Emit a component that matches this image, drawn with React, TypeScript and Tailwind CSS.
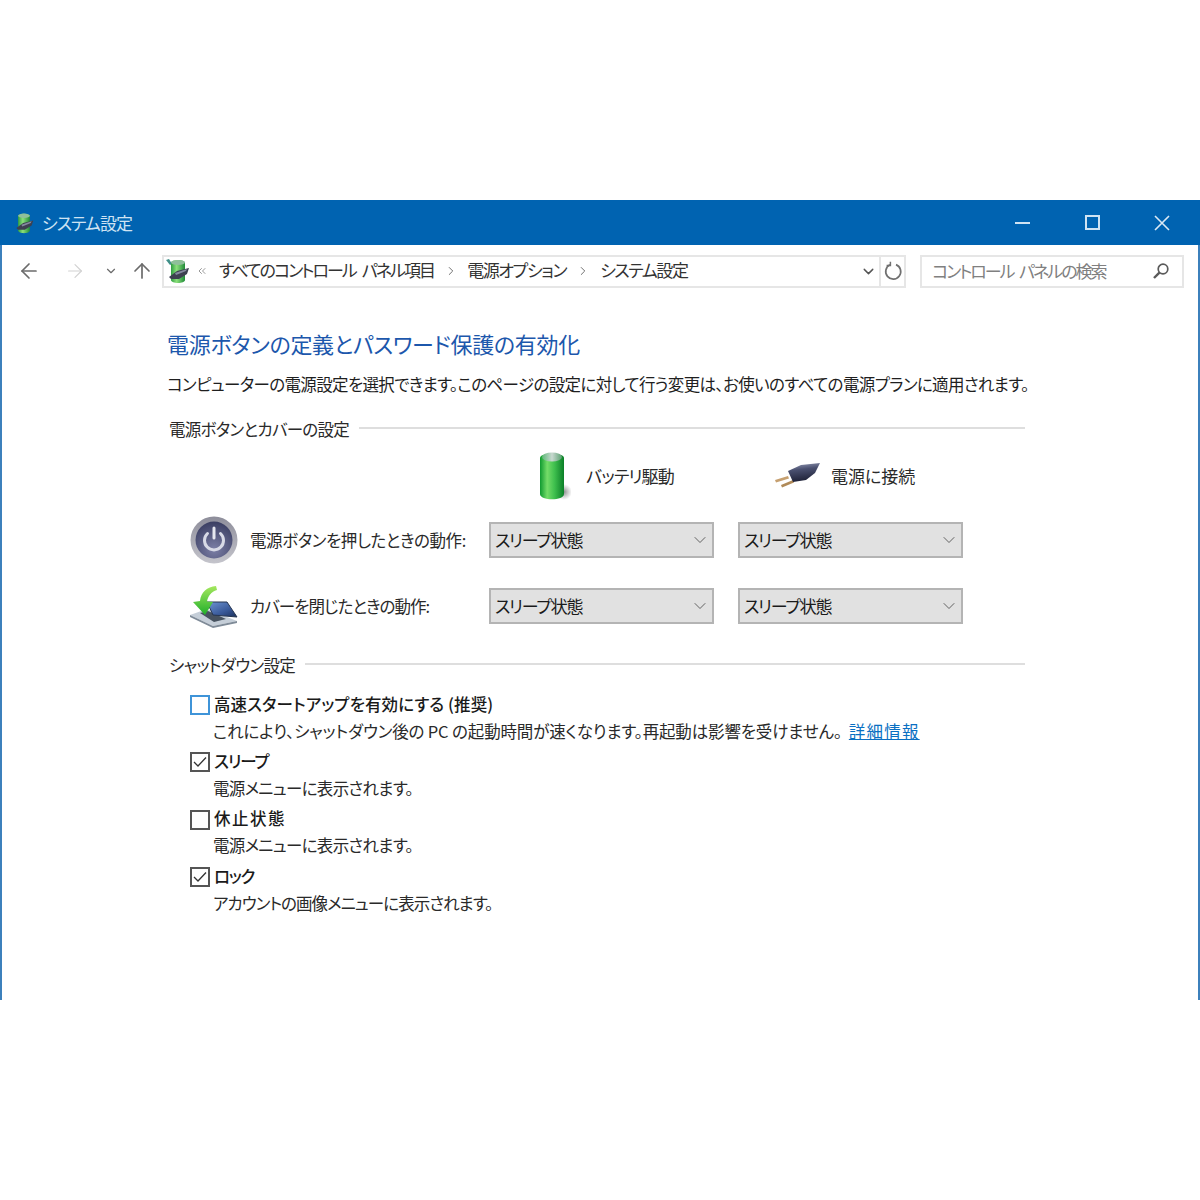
import { ArrowLeft, ArrowRight, ArrowUp, ChevronDown, ChevronRight, ChevronsLeft } from 'lucide-react';

const text = "font-['Noto_Sans_CJK_JP','Liberation_Sans',sans-serif] [font-feature-settings:'palt']";

function BatteryIcon() {
  return (
    <svg width="34" height="50" viewBox="0 0 34 50">
      <defs>
        <linearGradient id="batBody" x1="0" x2="1" y1="0" y2="0">
          <stop offset="0" stopColor="#0f9a30" />
          <stop offset="0.3" stopColor="#74dc68" />
          <stop offset="0.6" stopColor="#3fc04e" />
          <stop offset="1" stopColor="#0b7f28" />
        </linearGradient>
        <linearGradient id="batTop" x1="0" x2="1" y1="0" y2="0">
          <stop offset="0" stopColor="#5fb878" />
          <stop offset="0.5" stopColor="#c8d8d0" />
          <stop offset="1" stopColor="#5aa070" />
        </linearGradient>
        <radialGradient id="batShadow">
          <stop offset="0" stopColor="#707070" stopOpacity="0.8" />
          <stop offset="1" stopColor="#8a8a8a" stopOpacity="0" />
        </radialGradient>
      </defs>
      <ellipse cx="27" cy="41" rx="8" ry="8" fill="url(#batShadow)" />
      <path d="M3 7 C3 1 27 1 27 7 V43 C27 50 3 50 3 43 Z" fill="url(#batBody)" />
      <ellipse cx="15" cy="6" rx="10" ry="4.5" fill="url(#batTop)" />
    </svg>
  );
}

function PlugIcon() {
  return (
    <svg width="48" height="26" viewBox="0 0 48 26">
      <defs>
        <linearGradient id="plugBody" x1="0" x2="0.2" y1="0" y2="1">
          <stop offset="0" stopColor="#9aa0ba" />
          <stop offset="0.4" stopColor="#4a5070" />
          <stop offset="1" stopColor="#1f2238" />
        </linearGradient>
      </defs>
      <path d="M2 17 L15 13 L16 15.5 L3 19.5 Z" fill="#c6a070" />
      <path d="M8 22 L20 17 L21 19.5 L9 24.5 Z" fill="#b08a58" />
      <path d="M15 8 L28 2 L47 0 L42 10 L33 17 L20 19 Z" fill="url(#plugBody)" />
    </svg>
  );
}

function PowerIcon() {
  return (
    <svg width="48" height="48" viewBox="0 0 48 48">
      <defs>
        <linearGradient id="pwrRing" x1="0" x2="0" y1="0" y2="1">
          <stop offset="0" stopColor="#8d8d9a" />
          <stop offset="1" stopColor="#c5c5cc" />
        </linearGradient>
        <radialGradient id="pwrFace" cy="0.75" r="0.8">
          <stop offset="0" stopColor="#7c7fa6" />
          <stop offset="1" stopColor="#363a5e" />
        </radialGradient>
      </defs>
      <circle cx="24" cy="24" r="23.5" fill="url(#pwrRing)" />
      <circle cx="24" cy="24" r="18.5" fill="url(#pwrFace)" />
      <path d="M17.5 17.5 A9.5 9.5 0 1 0 30.5 17.5" fill="none" stroke="#d8dae6" strokeWidth="3" strokeLinecap="round" />
      <path d="M24 12 V22" stroke="#e6e8f0" strokeWidth="3" strokeLinecap="round" />
    </svg>
  );
}

function LidIcon() {
  return (
    <svg width="48" height="44" viewBox="0 0 48 44">
      <defs>
        <linearGradient id="lidScreen" x1="0" x2="1" y1="0" y2="1">
          <stop offset="0" stopColor="#6f96d4" />
          <stop offset="0.6" stopColor="#3a5a9a" />
          <stop offset="1" stopColor="#1b2f5a" />
        </linearGradient>
        <linearGradient id="lidArrow" x1="0" x2="0" y1="0" y2="1">
          <stop offset="0" stopColor="#a5e85e" />
          <stop offset="1" stopColor="#1fae2a" />
        </linearGradient>
      </defs>
      <path d="M0 31 L17 25 L47 37 L23 42 Z" fill="#c5ced8" />
      <path d="M0 31 L23 42 L47 37 L47 39 L23 44 L0 33 Z" fill="#7f8b98" />
      <path d="M10 29 L18 27 L36 35 L24 38 Z" fill="#47525f" />
      <path d="M17 18 L37 18 L47 33 L23 31 Z" fill="url(#lidScreen)" stroke="#26354f" strokeWidth="1" />
      <path d="M26 2 C17 3 11 8 10 17 L3 18 L15 31 L23 18 L17 17.5 C18 12 21 8 27 6 Z" fill="url(#lidArrow)" />
    </svg>
  );
}

function MiniPowerIcon({ size, tail }: { size: number; tail?: boolean }) {
  const id = tail ? 'miniA' : 'miniB';
  return (
    <svg width={size} height={size} viewBox="0 0 26 26">
      <defs>
        <linearGradient id={id} x1="0" x2="1" y1="0" y2="0">
          <stop offset="0" stopColor="#2f9e42" />
          <stop offset="0.4" stopColor="#8be07a" />
          <stop offset="1" stopColor="#1f8a38" />
        </linearGradient>
      </defs>
      {tail && <path d="M1 2 L4 1 L7 6 L5 7 Z" fill="#3f8f88" />}
      <path d="M6 5 C6 1 20 1 20 5 V22 C20 26 6 26 6 22 Z" fill={`url(#${id})`} />
      <ellipse cx="13" cy="4.5" rx="7" ry="2.6" fill="#8fbf9a" />
      <path d="M4 19 L12 13 L24 10 L22 16 L14 21 L6 21 Z" fill="#3d4150" />
      <path d="M10 15 L22 11 L21 13 L11 17 Z" fill="#858aa0" />
    </svg>
  );
}

function RefreshIcon() {
  return (
    <svg width="20" height="20" viewBox="0 0 20 20" fill="none" stroke="#707070" strokeWidth="1.7">
      <path d="M7 3.8 A7.5 7.5 0 1 0 13 3.6" />
      <path d="M7.4 0.8 V4.6 H3.6" strokeWidth="1.5" />
    </svg>
  );
}

function MagnifierIcon() {
  return (
    <svg width="18" height="18" viewBox="0 0 18 18" fill="none" stroke="#5a5a5a">
      <circle cx="11" cy="7" r="4.8" strokeWidth="1.7" />
      <path d="M7.4 10.6 L2 16" strokeWidth="2.4" />
    </svg>
  );
}

function SectionTitle({ label, tracking }: { label: string; tracking: string }) {
  return (
    <div className="flex h-6 w-[858px] items-center pl-[2px]">
      <span className={`${text} ${tracking} text-[16.5px] text-[#2a2a2a]`}>{label}</span>
      <div className="mb-[3px] ml-[10px] h-[2px] flex-1 bg-[#dedede]" />
    </div>
  );
}

function Select() {
  return (
    <div className="flex h-[36px] w-[225px] items-center justify-between border-2 border-[#b4b4b4] bg-[#e1e1e1] pl-[4px] pr-[2px]">
      <span className={`${text} text-[17px] tracking-[-1.2px] text-[#1a1a1a]`}>スリープ状態</span>
      <ChevronDown size={20} strokeWidth={1.1} className="text-[#555]" />
    </div>
  );
}

function ActionRow({ icon, label, tracking }: { icon: React.ReactNode; label: string; tracking: string }) {
  return (
    <div className="flex h-[36px] items-center pl-[23px]">
      <div className="flex w-[48px] shrink-0 justify-center">{icon}</div>
      <span className={`${text} ${tracking} ml-[12px] w-[239px] shrink-0 text-[16.5px] text-[#2a2a2a]`}>{label}</span>
      <div className="flex gap-[24px]">
        <Select />
        <Select />
      </div>
    </div>
  );
}

function CheckItem({
  title,
  titleTracking,
  descTracking,
  checked,
  focused,
  children,
}: {
  title: string;
  titleTracking: string;
  descTracking: string;
  checked?: boolean;
  focused?: boolean;
  children: React.ReactNode;
}) {
  return (
    <div className="pl-[23px]">
      <div className="flex h-[26px] items-center">
        <div
          className={`flex h-[20px] w-[20px] shrink-0 items-center justify-center border-2 ${
            focused ? 'border-[#3f94d8]' : 'border-[#555]'
          }`}
        >
          {checked && (
            <svg width="14" height="12" viewBox="0 0 14 12" fill="none" stroke="#333" strokeWidth="1.3">
              <path d="M1 6 L5 10 L13 1.5" />
            </svg>
          )}
        </div>
        <span className={`${text} ${titleTracking} ml-[4px] -translate-y-px text-[16.5px] font-medium text-[#1a1a1a]`}>{title}</span>
      </div>
      <div className={`${text} ${descTracking} flex h-[26px] items-center pl-[23px] text-[16.5px] text-[#2a2a2a]`}>
        {children}
      </div>
    </div>
  );
}

export default function App() {
  const crumb = `${text} -translate-y-px text-[17px] text-[#333]`;
  return (
    <div className="h-[1200px] w-[1200px] overflow-hidden bg-white pt-[200px]">
      <div className="h-[800px] border-x-2 border-[#3c80bc] bg-white">
        <div className="-mx-[2px] flex h-[45px] items-center bg-[#0063b1]">
          <div className="ml-[13px] flex w-[29px] items-center">
            <MiniPowerIcon size={22} />
          </div>
          <span className={`${text} text-[17px] tracking-[-1px] text-[#cfe3f3]`}>システム設定</span>
          <div className="ml-auto flex items-center">
            <div className="flex w-[70px] justify-center">
              <div className="h-[2px] w-[15px] bg-[#cfe3f3]" />
            </div>
            <div className="flex w-[70px] justify-center">
              <div className="h-[15px] w-[15px] border-2 border-[#cfe3f3]" />
            </div>
            <div className="mr-[3px] flex w-[70px] justify-center">
              <svg width="16" height="16" viewBox="0 0 16 16" stroke="#dbe9f5" strokeWidth="1.6">
                <path d="M1 1 L15 15 M15 1 L1 15" />
              </svg>
            </div>
          </div>
        </div>

        <div className="-ml-[2px] flex h-[52px] items-center">
          <div className="flex w-[162px] items-center text-[#6b6b6b]">
            <ArrowLeft size={24} strokeWidth={1.7} className="ml-[17px]" />
            <ArrowRight size={22} strokeWidth={1.3} className="ml-[23px] text-[#d2d2d2]" />
            <ChevronDown size={14} strokeWidth={2} className="ml-[18px]" />
            <ArrowUp size={24} strokeWidth={1.7} className="ml-[12px]" />
          </div>
          <div className="flex h-[33px] w-[744px] items-center border-2 border-[#e6e6e6]">
            <div className="ml-[1px] w-[28px] shrink-0">
              <MiniPowerIcon size={26} tail />
            </div>
            <ChevronsLeft size={12} strokeWidth={1.5} className="ml-[3px] text-[#777]" />
            <span className={`${crumb} ml-[11px] tracking-[-1.96px] [word-spacing:4px]`}>すべてのコントロール パネル項目</span>
            <ChevronRight size={14} strokeWidth={1.6} className="ml-[10px] text-[#666]" />
            <span className={`${crumb} ml-[9px] tracking-[-1.4px]`}>電源オプション</span>
            <ChevronRight size={14} strokeWidth={1.6} className="ml-[10px] text-[#666]" />
            <span className={`${crumb} ml-[10px] tracking-[-1.4px]`}>システム設定</span>
            <ChevronDown size={17} strokeWidth={2} className="ml-auto mr-[2px] text-[#555]" />
            <div className="flex h-full w-[25px] shrink-0 items-center justify-center border-l-2 border-[#e6e6e6]">
              <RefreshIcon />
            </div>
          </div>
          <div className="ml-[14px] flex h-[33px] w-[264px] items-center justify-between border-2 border-[#e6e6e6] pl-[10px] pr-[12px]">
            <span className={`${text} text-[17px] tracking-[-2.04px] text-[#808080] [word-spacing:4px]`}>コントロール パネルの検索</span>
            <MagnifierIcon />
          </div>
        </div>

        <div className="pl-[165px]">
          <h1 className={`${text} mt-[31px] flex h-[30px] items-center text-[22px] font-normal tracking-[-0.3px] text-[#1c57ac]`}>
            電源ボタンの定義とパスワード保護の有効化
          </h1>
          <p className={`${text} mt-[14px] flex h-6 items-center text-[16.5px] tracking-[-0.63px] text-[#1f1f1f]`}>
            コンピューターの電源設定を選択できます。このページの設定に対して行う変更は、お使いのすべての電源プランに適用されます。
          </p>
          <div className="mt-[21px]">
            <SectionTitle label="電源ボタンとカバーの設定" tracking="tracking-[-0.7px]" />
          </div>
          <div className="mt-[11px] flex h-[48px] items-center pl-[370px]">
            <div className="flex w-[236px] items-center">
              <BatteryIcon />
              <span className={`${text} ml-[15px] text-[17px] tracking-[-0.8px] text-[#2a2a2a]`}>バッテリ駆動</span>
            </div>
            <PlugIcon />
            <span className={`${text} ml-[10px] text-[17px] tracking-[0px] text-[#2a2a2a]`}>電源に接続</span>
          </div>
          <div className="mt-[22px]">
            <ActionRow icon={<PowerIcon />} label="電源ボタンを押したときの動作:" tracking="tracking-[-0.4px]" />
          </div>
          <div className="mt-[30px]">
            <ActionRow icon={<LidIcon />} label="カバーを閉じたときの動作:" tracking="tracking-[-0.95px]" />
          </div>
          <div className="mt-[29px]">
            <SectionTitle label="シャットダウン設定" tracking="tracking-[-0.65px]" />
          </div>
          <div className="mt-[15px] flex flex-col gap-[5.33px]">
            <CheckItem
              title="高速スタートアップを有効にする (推奨)"
              titleTracking="tracking-[0.1px]"
              descTracking="tracking-[-0.15px]"
              focused
            >
              これにより、シャットダウン後の PC の起動時間が速くなります。再起動は影響を受けません。
              <a className="ml-[7px] tracking-[1.2px] text-[#0a6fc2] underline">詳細情報</a>
            </CheckItem>
            <CheckItem title="スリープ" titleTracking="tracking-[-1px]" descTracking="tracking-[-0.7px]" checked>
              電源メニューに表示されます。
            </CheckItem>
            <CheckItem title="休止状態" titleTracking="tracking-[1.5px]" descTracking="tracking-[-0.7px]">
              電源メニューに表示されます。
            </CheckItem>
            <CheckItem title="ロック" titleTracking="tracking-[-1.3px]" descTracking="tracking-[-0.95px]" checked>
              アカウントの画像メニューに表示されます。
            </CheckItem>
          </div>
        </div>
      </div>
    </div>
  );
}
